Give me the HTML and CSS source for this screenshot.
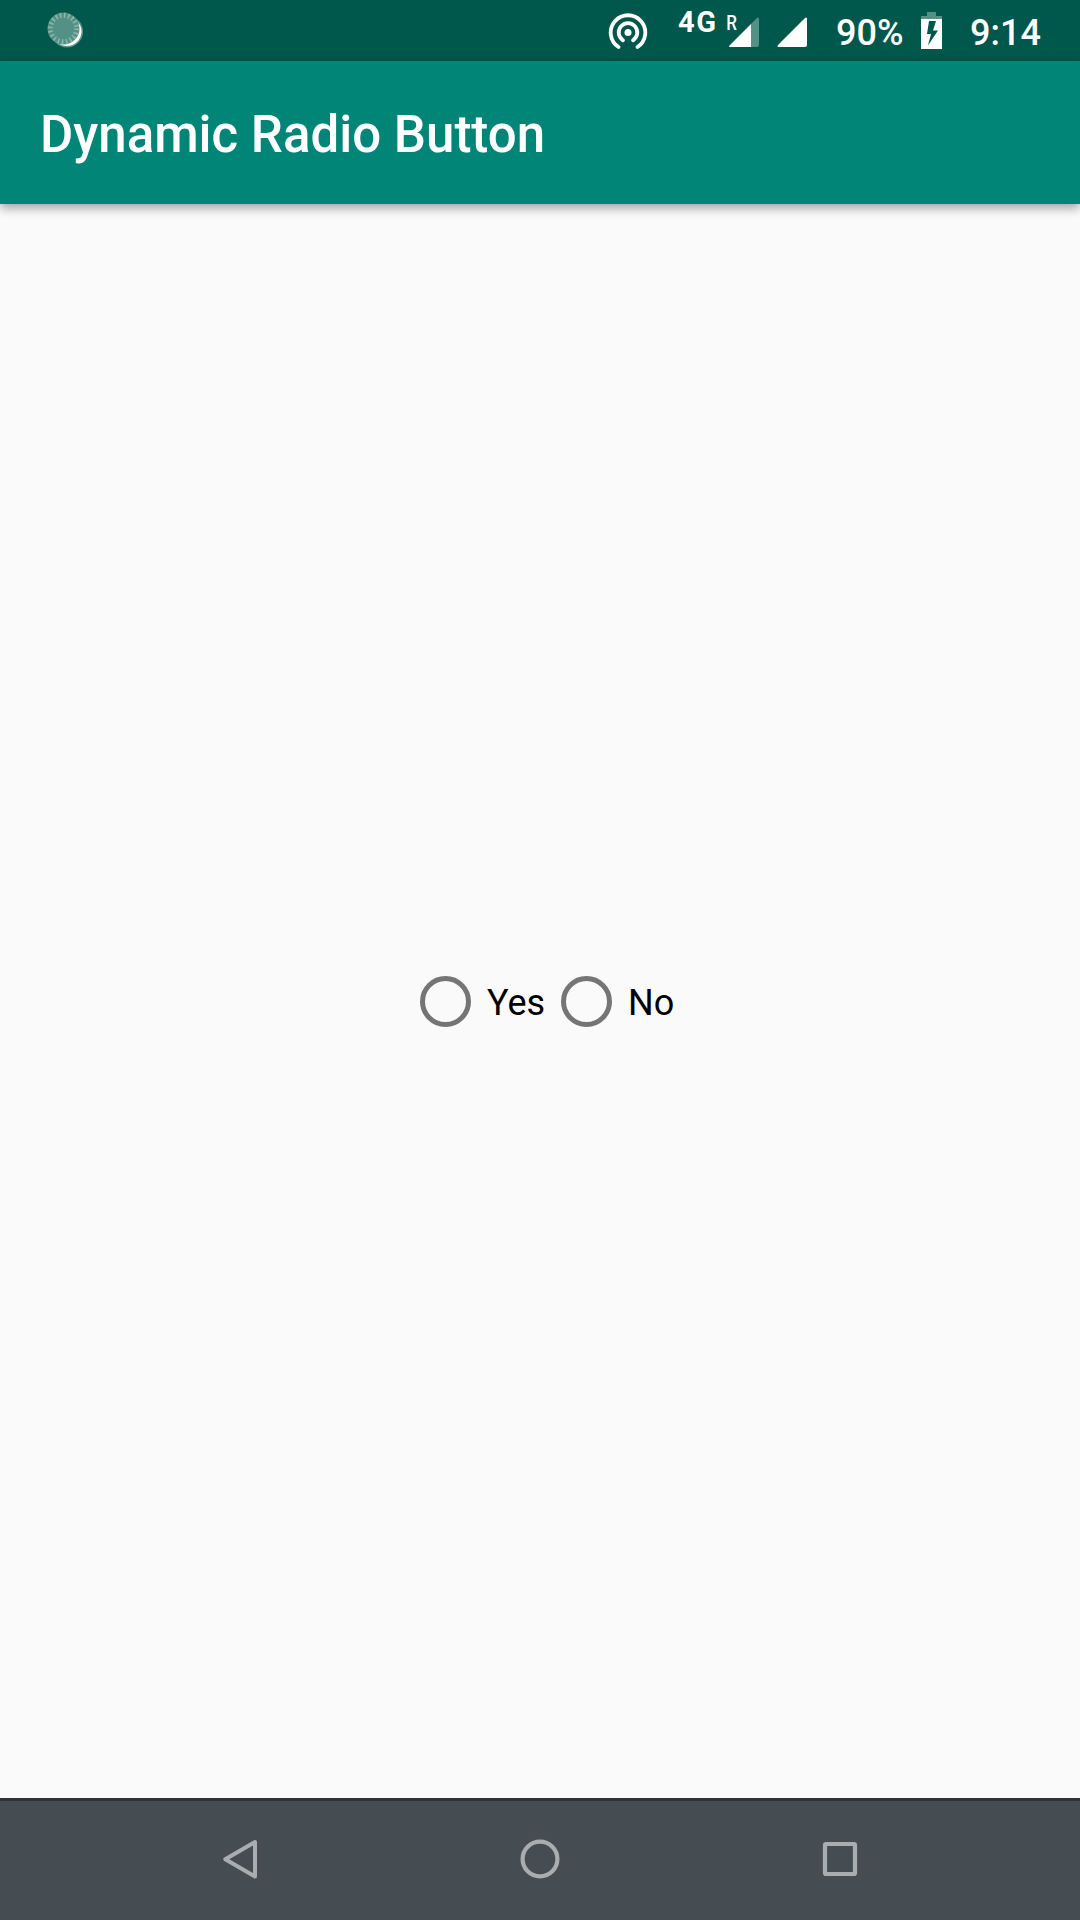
FILE: index.html
```html
<!DOCTYPE html>
<html lang="en">
<head>
<meta charset="utf-8">
<title>Dynamic Radio Button</title>
<link rel="stylesheet" href="styles.css">
</head>
<body>
<div class="screen">
  <div class="status-bar">
    <svg class="sync" width="38" height="61" viewBox="46 0 38 61">
      <circle cx="67" cy="31.500" r="15.300" fill="#fff" stroke="#5b9188" stroke-width="1.500"/>
      <circle cx="63.500" cy="28.500" r="16" fill="#539085"/>
      <circle cx="63.500" cy="28.500" r="13.200" fill="none" stroke="#8db5ae" stroke-width="5" stroke-dasharray="1.600 2.547"/>
    </svg>
    <svg class="hotspot" width="40" height="61" viewBox="608 0 40 61">
      <circle cx="628" cy="32.500" r="3.500" fill="#fff"/>
      <g fill="none" stroke="#fff" stroke-width="3.800" stroke-linecap="round">
        <path d="M623 40.300A9.300 9.300 0 1 1 633 40.300"/>
        <path d="M618.500 47A17.300 17.300 0 1 1 637.500 47"/>
      </g>
    </svg>
    <span class="network">4G</span>
    <span class="roaming">R</span>
    <svg class="signal" width="31" height="61" viewBox="729 0 31 61">
      <path d="M751 24L757 18Q759 16.500 759 19V45Q759 47 757 47H751Z" fill="#539085"/>
      <path d="M751 24V47H730.500Q728 47 730 45Z" fill="#fff"/>
    </svg>
    <svg class="signal-full" width="31" height="61" viewBox="777 0 31 61">
      <path d="M778 45L805 18Q807 16.500 807 19V45Q807 47 805 47H779Q776.500 47 778 45Z" fill="#fff"/>
    </svg>
    <span class="percent">90%</span>
    <svg class="battery" width="21" height="61" viewBox="921 0 21 61">
      <path d="M927 12H936V16H942V19H921V16H927Z" fill="#539085"/>
      <path d="M921 19H942V49H921ZM929 21L927 34H931L928 45.500L938 30.500H933L936 21Z" fill="#fff" fill-rule="evenodd"/>
    </svg>
    <span class="clock">9:14</span>
  </div>
  <header class="app-bar"><h1 class="title">Dynamic Radio Button</h1></header>
  <main class="content">
    <div class="radio-group" role="radiogroup">
      <div class="radio" role="radio" aria-checked="false"><span class="ring"></span><span class="label">Yes</span></div>
      <div class="radio" role="radio" aria-checked="false"><span class="ring"></span><span class="label">No</span></div>
    </div>
  </main>
  <nav class="nav-bar">
    <svg width="40" height="44" viewBox="220 1837 40 44"><path d="M225.300 1859.200L255 1842V1876.500Z" fill="none" stroke="#a9adaf" stroke-width="4" stroke-linejoin="round"/></svg>
    <svg width="40" height="44" viewBox="520 1837 40 44"><circle cx="540" cy="1859" r="17.400" fill="none" stroke="#a9adaf" stroke-width="4.200"/></svg>
    <svg width="40" height="44" viewBox="820 1837 40 44"><rect x="825" y="1844" width="30" height="30" rx="1" fill="none" stroke="#a9adaf" stroke-width="4.200"/></svg>
  </nav>
</div>
</body>
</html>
```
FILE: styles.css
```css
* { box-sizing: border-box; }
body { margin: 0; font-family: Roboto, "Liberation Sans", sans-serif; }
svg { display: block; flex: none; }

.screen {
  width: 1080px;
  height: 1920px;
  display: flex;
  flex-direction: column;
  background: #fafafa;
}

.status-bar {
  height: 61px;
  display: flex;
  padding-left: 46px;
  background: #00574b;
  color: #fff;
  white-space: nowrap;
}
.sync { margin-right: 524px; }
.network {
  width: 48px;
  margin-left: 30px;
  font-size: 29px;
  font-weight: 700;
  line-height: 45px;
  letter-spacing: 1.5px;
}
.roaming {
  width: 3px;
  font-size: 20px;
  font-weight: 500;
  line-height: 47px;
  transform: scaleX(0.85);
}
.signal-full { margin-left: 17px; }
.percent, .clock {
  font-size: 36px;
  font-weight: 500;
  line-height: 67px;
}
.percent { width: 78px; margin-left: 28px; }
.battery { margin-left: 7px; }
.clock { margin-left: 28px; }

.app-bar {
  height: 143px;
  display: flex;
  align-items: center;
  padding: 5px 0 0 40px;
  background: #008577;
  box-shadow: 0 4px 10px rgba(0, 0, 0, 0.36);
}
.title {
  margin: 0;
  color: #fff;
  font-size: 51px;
  font-weight: 500;
  line-height: 60px;
}

.content {
  flex: 1;
  display: flex;
  align-items: center;
  justify-content: center;
  padding-left: 21px;
}
.radio-group { display: flex; }
.radio {
  height: 82px;
  display: flex;
  align-items: center;
  width: 141px;
}
.radio:last-child { width: 120px; }
.ring {
  width: 51px;
  height: 51px;
  border: 5px solid #757575;
  border-radius: 50%;
}
.label {
  margin-left: 16px;
  padding-top: 4px;
  font-size: 36px;
  line-height: 42px;
  color: #000;
}

.nav-bar {
  height: 122px;
  display: flex;
  justify-content: center;
  gap: 260px;
  padding-top: 36px;
  background: #454d52;
  border-top: 3px solid #2e3436;
}
```
